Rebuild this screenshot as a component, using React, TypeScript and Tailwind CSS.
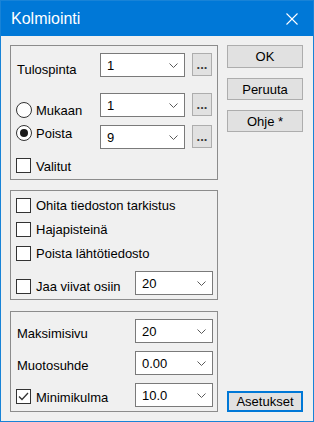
import React from "react"

const Chevron = () => (
  <svg width="9" height="5" viewBox="0 0 9 5" className="shrink-0">
    <polyline points="0.5,0.5 4.5,4.5 8.5,0.5" fill="none" stroke="#5a5a5a" strokeWidth="1" />
  </svg>
)

const Combo = ({ value, w }: { value: string; w: string }) => (
  <div className={`${w} h-[24px] bg-white border border-[#7a7a7a] flex items-center justify-between pl-[6px] pr-[6px] shrink-0`}>
    <span>{value}</span>
    <Chevron />
  </div>
)

const Dots = () => (
  <div className="ml-[7px] w-[20px] h-[23px] bg-[#e1e1e1] border border-[#adadad] flex items-center justify-center shrink-0 font-bold text-[#3a3a3a] leading-none">
    ...
  </div>
)

const Check = ({ checked = false }: { checked?: boolean }) => (
  <div className="w-[15px] h-[15px] bg-white border border-[#333] flex items-center justify-center shrink-0">
    {checked && (
      <svg width="13" height="13" viewBox="0 0 13 13">
        <polyline points="2,6.5 5,9.5 11,3" fill="none" stroke="#333" strokeWidth="1.3" />
      </svg>
    )}
  </div>
)

const Radio = ({ checked = false }: { checked?: boolean }) => (
  <div className="w-[16px] h-[16px] rounded-full bg-white border border-[#333] flex items-center justify-center shrink-0">
    {checked && <div className="w-[8px] h-[8px] rounded-full bg-[#1a1a1a]" />}
  </div>
)

const Button = ({ children, className = "" }: { children: React.ReactNode; className?: string }) => (
  <div className={`w-[76px] bg-[#e1e1e1] flex items-center justify-center ${className}`}>{children}</div>
)

export default function App() {
  return (
    <div className="w-[314px] h-[422px] bg-[#f0f0f0] border border-[#1883d7] flex flex-col font-['Liberation_Sans',Arial,sans-serif] text-[13px] text-black leading-none">
      <div className="h-[35px] bg-[#0078d7] flex items-center justify-between pl-[10px] pr-[15px] shrink-0">
        <span className="text-white text-[16px]">Kolmiointi</span>
        <svg width="12" height="12" viewBox="0 0 12 12">
          <line x1="0.5" y1="0.5" x2="11.5" y2="11.5" stroke="white" strokeWidth="1.1" />
          <line x1="11.5" y1="0.5" x2="0.5" y2="11.5" stroke="white" strokeWidth="1.1" />
        </svg>
      </div>

      <div className="flex pl-[9px] pt-[9px]">
        {/* vasen sarake */}
        <div className="w-[208px] flex flex-col">
          <div className="h-[135px] border border-[#8c8c8c] flex flex-col pt-[7px] pl-[5px] pr-[5px]">
            <div className="h-[24px] flex items-start">
              <span className="flex-1 ml-[1px] mt-[10px]">Tulospinta</span>
              <Combo value="1" w="w-[85px]" />
              <Dots />
            </div>
            <div className="h-[24px] mt-[16px] flex items-start">
              <div className="flex-1 flex items-center mt-[9px]">
                <Radio />
                <span className="ml-[4px] pt-[1px]">Mukaan</span>
              </div>
              <Combo value="1" w="w-[85px]" />
              <Dots />
            </div>
            <div className="h-[24px] mt-[8px] flex items-start">
              <div className="flex-1 flex items-center">
                <Radio checked />
                <span className="ml-[4px] pt-[1px]">Poista</span>
              </div>
              <Combo value="9" w="w-[85px]" />
              <Dots />
            </div>
            <div className="h-[24px] mt-[4px] flex items-center">
              <Check />
              <span className="ml-[5px] pt-[3px]">Valitut</span>
            </div>
          </div>

          <div className="h-[110px] mt-[10px] border border-[#8c8c8c] flex flex-col pt-[4px] pl-[5px] pr-[4px]">
            <div className="h-[20px] flex items-center">
              <Check />
              <span className="ml-[5px] pt-[1px]">Ohita tiedoston tarkistus</span>
            </div>
            <div className="h-[20px] mt-[4px] flex items-center">
              <Check />
              <span className="ml-[5px]">Hajapisteinä</span>
            </div>
            <div className="h-[20px] mt-[4px] flex items-center">
              <Check />
              <span className="ml-[5px]">Poista lähtötiedosto</span>
            </div>
            <div className="h-[24px] mt-[8px] flex items-center">
              <div className="flex-1 flex items-center mt-[7px]">
                <Check />
                <span className="ml-[5px]">Jaa viivat osiin</span>
              </div>
              <Combo value="20" w="w-[78px]" />
            </div>
          </div>

          <div className="h-[101px] mt-[11px] border border-[#8c8c8c] flex flex-col pt-[7px] pl-[5px] pr-[4px]">
            <div className="h-[24px] flex items-center">
              <span className="flex-1 ml-[1px] mt-[4px]">Maksimisivu</span>
              <Combo value="20" w="w-[78px]" />
            </div>
            <div className="h-[24px] mt-[8px] flex items-center">
              <span className="flex-1 ml-[1px] mt-[4px]">Muotosuhde</span>
              <Combo value="0.00" w="w-[78px]" />
            </div>
            <div className="h-[24px] mt-[8px] flex items-center">
              <div className="flex-1 flex items-center mt-[3px]">
                <Check checked />
                <span className="ml-[5px] pt-[1px]">Minimikulma</span>
              </div>
              <Combo value="10.0" w="w-[78px]" />
            </div>
          </div>
        </div>

        {/* oikea sarake */}
        <div className="ml-[9px] flex flex-col">
          <Button className="h-[23px] border border-[#adadad]">OK</Button>
          <Button className="h-[22px] mt-[10px] border border-[#adadad]">Peruuta</Button>
          <Button className="h-[22px] mt-[10px] border border-[#adadad]">Ohje *</Button>
          <Button className="h-[21px] mt-auto border-2 border-[#0078d7]">Asetukset</Button>
        </div>
      </div>
    </div>
  )
}
